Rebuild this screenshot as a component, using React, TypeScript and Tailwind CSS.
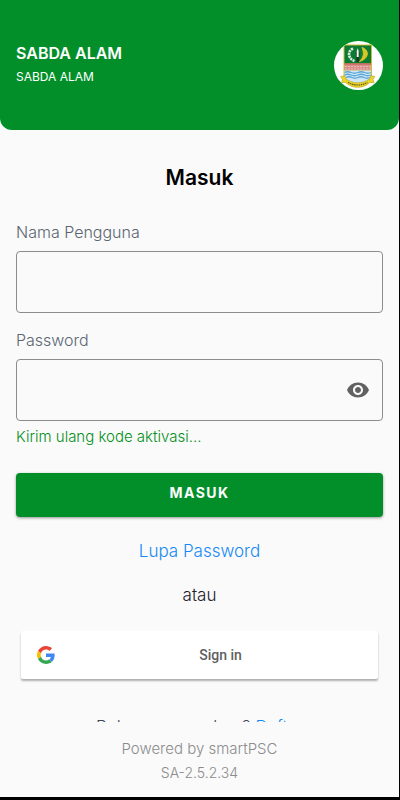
import { useState } from 'react'
import type { FormEvent } from 'react'

const App = () => {
  const [username, setUsername] = useState('')
  const [password, setPassword] = useState('')
  const [visible, setVisible] = useState(false)

  const handleSubmit = (e: FormEvent) => {
    e.preventDefault()
  }

  return (
    <div className="flex h-screen flex-col border-r border-b-3 border-black bg-[#fafafa] font-[Inter,sans-serif]">
      <header className="flex h-[130px] shrink-0 items-center justify-between rounded-b-xl bg-[#028f29] px-4 text-white">
        <div>
          <p className="text-base leading-6 font-semibold">SABDA ALAM</p>
          <p className="text-xs leading-6">SABDA ALAM</p>
        </div>
        <div className="flex size-[49px] items-center justify-center overflow-hidden rounded-full bg-white">
          <Emblem />
        </div>
      </header>

      <main className="min-h-0 flex-1 overflow-hidden px-4 pt-8">
        <h1 className="text-center text-[21px] leading-8 font-semibold text-black">Masuk</h1>

        <form onSubmit={handleSubmit} className="mt-[26px]">
          <label htmlFor="username" className="block text-base leading-6 font-light text-[#5b6672]">
            Nama Pengguna
          </label>
          <input
            id="username"
            value={username}
            onChange={(e) => setUsername(e.target.value)}
            className="mt-[7px] block h-[62px] w-full rounded border border-[#8c8c8c] px-3 text-base outline-none"
          />

          <label
            htmlFor="password"
            className="mt-[15px] block text-base leading-6 font-light text-[#5b6672]"
          >
            Password
          </label>
          <div className="mt-[7px] flex h-[62px] items-center rounded border border-[#8c8c8c] pr-3">
            <input
              id="password"
              type={visible ? 'text' : 'password'}
              value={password}
              onChange={(e) => setPassword(e.target.value)}
              className="h-full min-w-0 flex-1 px-3 text-base outline-none"
            />
            <button
              type="button"
              aria-label="Tampilkan password"
              onClick={() => setVisible((prev) => !prev)}
              className="text-[#616161]"
            >
              <svg viewBox="0 0 24 24" className="size-6" fill="currentColor">
                <path d="M12 4.5C7 4.5 2.73 7.61 1 12c1.73 4.39 6 7.5 11 7.5s9.27-3.11 11-7.5c-1.73-4.39-6-7.5-11-7.5zM12 17c-2.76 0-5-2.24-5-5s2.24-5 5-5 5 2.24 5 5-2.24 5-5 5zm0-8c-1.66 0-3 1.34-3 3s1.34 3 3 3 3-1.34 3-3-1.34-3-3-3z" />
              </svg>
            </button>
          </div>
          <a
            href="#aktivasi"
            className="mt-1 block text-[15px] leading-6 font-light text-[#028f19]"
          >
            Kirim ulang kode aktivasi...
          </a>

          <button
            type="submit"
            className="mt-6 block h-11 w-full rounded bg-[#028f29] pb-1 text-sm font-bold tracking-widest text-white shadow-[0_1px_3px_rgba(0,0,0,0.4)]"
          >
            MASUK
          </button>
        </form>

        <div className="mt-[22px] text-center text-[17px] leading-6 font-light">
          <a href="#lupa" className="text-[#1489f5]">
            Lupa Password
          </a>
        </div>
        <p className="mt-5 text-center text-[17px] leading-6 font-light text-[#1a202b]">
          atau
        </p>

        <div className="mt-6 px-[5px]">
          <button
            type="button"
            className="flex h-12 w-full items-center rounded-xs bg-white px-4 font-[Roboto,sans-serif] text-sm font-medium text-[#5f5f5f] shadow-[0_2px_2px_rgba(0,0,0,0.3)]"
          >
            <GoogleIcon />
            <span className="flex-1 pl-6 text-center">Sign in</span>
          </button>
        </div>

        <p className="mt-9 text-center text-[17px] leading-6 font-light text-[#3c4652]">
          Belum punya akun?{' '}
          <a href="#daftar" className="text-[#1489f5]">
            Daftar
          </a>
        </p>
      </main>

      <footer className="shrink-0 pt-[15px] pb-3 text-center text-[15px] leading-6 font-light text-[#8c8c8c]">
        <p>Powered by smartPSC</p>
        <p className="text-sm leading-6">SA-2.5.2.34</p>
      </footer>
    </div>
  )
}

const GoogleIcon = () => (
  <svg viewBox="0 0 48 48" className="size-[18px] shrink-0">
    <path
      fill="#EA4335"
      d="M24 9.5c3.54 0 6.71 1.22 9.21 3.6l6.85-6.85C35.9 2.38 30.47 0 24 0 14.62 0 6.51 5.38 2.56 13.22l7.98 6.19C12.43 13.72 17.74 9.5 24 9.5z"
    />
    <path
      fill="#4285F4"
      d="M46.98 24.55c0-1.57-.15-3.09-.38-4.55H24v9.02h12.94c-.58 2.96-2.26 5.48-4.78 7.18l7.73 6c4.51-4.18 7.09-10.36 7.09-17.65z"
    />
    <path
      fill="#FBBC05"
      d="M10.53 28.59c-.48-1.45-.76-2.99-.76-4.59s.27-3.14.76-4.59l-7.98-6.19C.92 16.46 0 20.12 0 24c0 3.88.92 7.54 2.56 10.78l7.97-6.19z"
    />
    <path
      fill="#34A853"
      d="M24 48c6.48 0 11.93-2.13 15.89-5.81l-7.73-6c-2.15 1.45-4.92 2.3-8.16 2.3-6.26 0-11.57-4.22-13.47-9.91l-7.98 6.19C6.51 42.62 14.62 48 24 48z"
    />
  </svg>
)

// Regency coat of arms
const Emblem = () => (
  <svg viewBox="0 0 49 49" className="size-full">
    <path d="M9.500 3.500h28.500v31c0 5-6 8-14.300 11C15.500 42.500 9.500 39.500 9.500 34.500z" fill="#c9c02a" />
    <path d="M10.500 4.500h26.500v18H10.500z" fill="#0a7a34" />
    <path d="M10.500 22.500h26.500v7H10.500z" fill="#d98e8a" />
    <path d="M10.500 23h26.500" stroke="#c65a55" />
    <path d="M11 25.500h26M11 28h26" stroke="#eec4c0" strokeDasharray="2 1" strokeWidth=".8" />
    <path d="M10.500 29.500h26.500v5c0 4-6 7-13.300 9.500-7.200-2.500-13.200-5.500-13.200-9.500z" fill="#cfe6f5" />
    <path
      d="M10.500 31.500q3-1.500 6.500 0t7 0 6.500 0 6.500 0M10.500 34q3-1.500 6.500 0t7 0 6.500 0 6.500 0M12 36.500q3-1.500 6 0t6 0 6 0 6 0"
      fill="none"
      stroke="#5ba6d8"
      strokeWidth="1.300"
    />
    {/* cotton, blade and rice */}
    <path
      d="M19 7.500c-6 3-5 10 1.500 12.500"
      fill="none"
      stroke="#dfe9dc"
      strokeWidth="2.600"
      strokeDasharray="2.200 .7"
    />
    <path d="M28 6.500c7 2 8 11-2.500 14 4-4 5-8 2.500-14z" fill="#d8c726" stroke="#d8c726" />
    <path d="M23.700 7l1.800 5-.6 9h-2.400l-.6-9z" fill="#173c22" />
    <path d="M23.700 7l1 3v6h-2v-6z" fill="#f3f5f0" />
    <path
      d="M6.500 35.500l4-.8 1.500 3.300c7 5 16.500 5 23.500 0l1.500-3.300 4 .8-2 3 1 3.200-4-.3c-7 6.600-17.500 6.600-24.500 0l-4 .3 1-3.200z"
      fill="#ecd526"
      stroke="#a8962a"
      strokeWidth=".5"
    />
    <path
      d="M14 41.500q9.700 5 19.500 0"
      fill="none"
      stroke="#5c551d"
      strokeWidth="1.200"
      strokeDasharray="1.500 .7"
    />
  </svg>
)

export default App
